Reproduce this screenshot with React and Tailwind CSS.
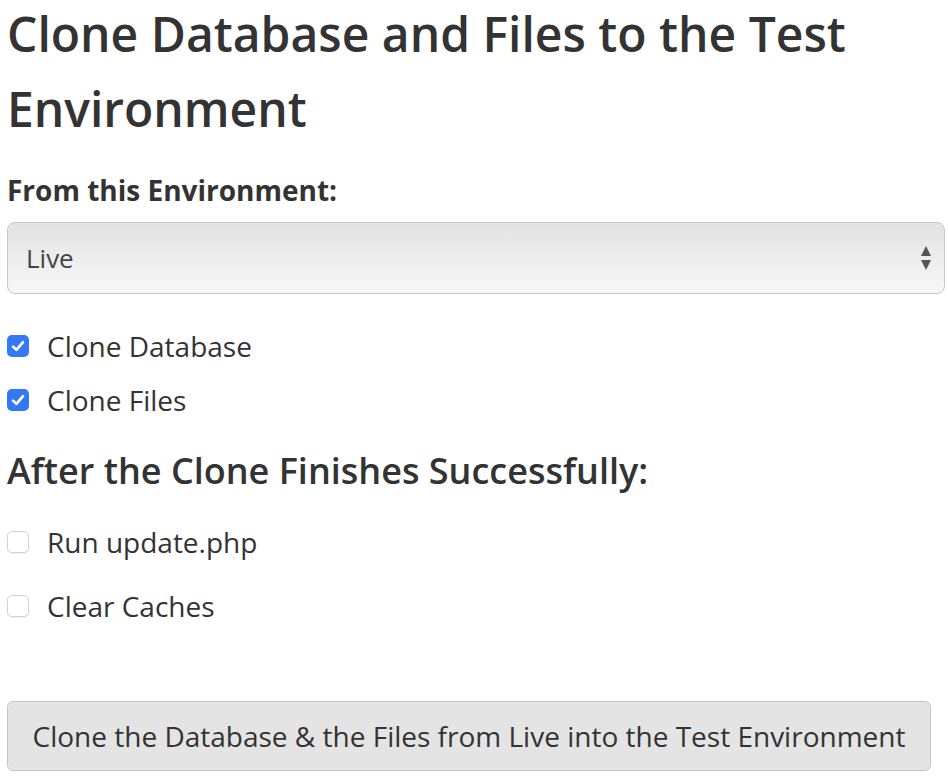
import React, { useState } from 'react';

// Small checkbox drawn as a rounded square, blue with a tick when on
const Check = ({ checked, onChange, label, className = '' }) => (
  <label className={`flex items-center cursor-pointer h-[38px] ${className}`}>
    <input type="checkbox" className="sr-only" checked={checked} onChange={onChange} />
    <span
      className={`flex items-center justify-center w-[22px] h-[22px] rounded-[5px] ${
        checked ? 'bg-[#3478f6]' : 'bg-white border border-[#d2d2d2] shadow-[0_1px_1px_rgba(0,0,0,0.06)]'
      }`}
    >
      {checked && (
        <svg width="16" height="16" viewBox="0 0 16 16" fill="none">
          <path d="M3 8.6 L6.4 11.8 L13 4.2" stroke="white" strokeWidth="2.6" strokeLinecap="round" strokeLinejoin="round" />
        </svg>
      )}
    </span>
    <span className="ml-[18px] text-[28px] leading-[38px] text-[#333]">{label}</span>
  </label>
);

export default function App() {
  const [opts, setOpts] = useState({ db: true, files: true, update: false, cache: false });
  const toggle = (k) => () => setOpts((o) => ({ ...o, [k]: !o[k] }));

  return (
    <div className="w-[948px] h-[776px] bg-white pl-[7px] pr-[3px] font-['Open_Sans',sans-serif] text-[#333] overflow-hidden">
      <h1 className="text-[48px] font-semibold leading-[75px] -mt-[4px]">
        Clone Database and Files to the Test Environment
      </h1>

      <div className="mt-[27px] text-[28px] font-bold leading-[34px]">From this Environment:</div>

      <div className="mt-[15px] relative h-[72px] rounded-[8px] border border-[#c8c8c8] bg-gradient-to-b from-[#e2e2e2] to-[#f8f8f8] flex items-center pl-[18px]">
        <span className="text-[26px] text-[#444]">Live</span>
        <svg className="absolute right-[12px] top-1/2 -translate-y-1/2" width="12" height="26" viewBox="0 0 12 26">
          <path d="M6 1 L11 11 L1 11 Z" fill="#555" />
          <path d="M6 25 L11 15 L1 15 Z" fill="#555" />
        </svg>
      </div>

      <div className="mt-[33px] flex flex-col gap-[16px]">
        <Check checked={opts.db} onChange={toggle('db')} label="Clone Database" />
        <Check checked={opts.files} onChange={toggle('files')} label="Clone Files" />
      </div>

      <h2 className="mt-[29px] text-[36px] font-semibold leading-[46px]">After the Clone Finishes Successfully:</h2>

      <div className="mt-[29px] flex flex-col gap-[26px]">
        <Check checked={opts.update} onChange={toggle('update')} label="Run update.php" />
        <Check checked={opts.cache} onChange={toggle('cache')} label="Clear Caches" />
      </div>

      <button className="mt-[76px] w-[924px] h-[70px] rounded-[6px] border border-[#c4c4c4] bg-[#e4e4e4] text-[28px] text-[#333]">
        Clone the Database &amp; the Files from Live into the Test Environment
      </button>
    </div>
  );
}
